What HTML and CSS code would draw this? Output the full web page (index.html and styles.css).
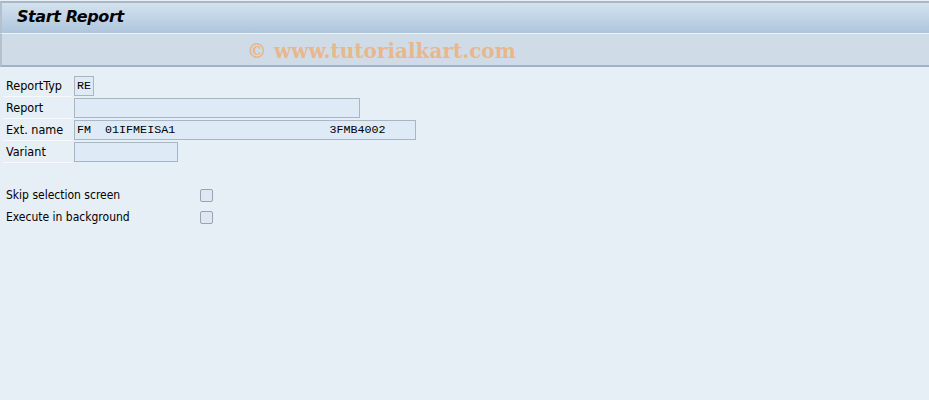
FILE: index.html
```html
<!DOCTYPE html>
<html>
<head>
<meta charset="utf-8">
<link rel="stylesheet" href="styles.css">
</head>
<body>
<div class="header">
  <div class="title-bar"><span class="title">Start Report</span></div>
  <div class="toolbar"><span class="watermark">© www.tutorialkart.com</span></div>
</div>
<div class="content">
  <div class="form">
    <div class="row"><div class="label">ReportTyp</div><div class="field w-re">RE</div></div>
    <div class="row"><div class="label">Report</div><div class="field w-report"></div></div>
    <div class="row"><div class="label">Ext. name</div><div class="field w-ext">FM  01IFMEISA1                      3FMB4002</div></div>
    <div class="row"><div class="label">Variant</div><div class="field w-var"></div></div>
  </div>
  <div class="checks">
    <div class="check-row"><span class="check-label">Skip selection screen</span><span class="checkbox"></span></div>
    <div class="check-row"><span class="check-label">Execute in background</span><span class="checkbox"></span></div>
  </div>
</div>
</body>
</html>
```
FILE: styles.css
```css
html, body {
  margin: 0;
  padding: 0;
}
body {
  background: #e6eef6;
  font-family: Tahoma, "DejaVu Sans", "Liberation Sans", sans-serif;
  font-size: 12px;
  color: #000;
  width: 929px;
  height: 400px;
  overflow: hidden;
}
.header {
  border-top: 1px solid #e9eff5;
}
.title-bar {
  height: 30px;
  border-top: 2px solid #a9b8c7;
  border-left: 2px solid #b3c1cf;
  background: linear-gradient(#d5e2ee, #adc5dc);
  display: flex;
  align-items: center;
  border-bottom: 1px solid #eef3f8;
}
.title {
  font-family: "DejaVu Sans", sans-serif;
  font-weight: bold;
  font-style: italic;
  font-size: 16px;
  padding-left: 15px;
  margin-top: -4px;
  letter-spacing: -0.4px;
}
.toolbar {
  height: 31px;
  background: #cfdce7;
  border-left: 2px solid #b3c1cf;
  border-bottom: 2px solid #9fb1c3;
  position: relative;
}
.watermark {
  position: absolute;
  left: 245px;
  top: 5px;
  font-family: "DejaVu Serif", serif;
  font-weight: bold;
  font-size: 20px;
  color: #e8b78c;
  white-space: pre;
}
.content {
  padding: 8px 0 0 3px;
}
.form {
  display: flex;
  flex-direction: column;
}
.row {
  display: flex;
  height: 22px;
  align-items: flex-start;
}
.label {
  width: 66px;
  height: 21px;
  line-height: 21px;
  padding-left: 3px;
  border-bottom: 1px solid #f7fafc;
  font-family: "DejaVu Sans Condensed", "DejaVu Sans", sans-serif;
  font-size: 12.5px;
}
.field {
  margin-left: 2px;
  margin-top: 1px;
  height: 18px;
  line-height: 18px;
  border: 1px solid #a8b5c2;
  background: #deeaf5;
  font-family: "Liberation Mono", monospace;
  font-size: 11.7px;
  padding-left: 2px;
  white-space: pre;
  box-sizing: content-box;
}
.w-re { width: 16px; }
.w-report { width: 282px; }
.w-ext { width: 338px; }
.w-var { width: 100px; }
.checks {
  margin-top: 21px;
  display: flex;
  flex-direction: column;
}
.check-row {
  display: flex;
  align-items: center;
  height: 22px;
}
.check-label {
  width: 194px;
  padding-left: 3px;
  font-family: "DejaVu Sans Condensed", "DejaVu Sans", sans-serif;
  font-size: 12px;
}
.checkbox {
  width: 11px;
  height: 11px;
  border: 1px solid #98a4b0;
  border-radius: 2px;
  background: #dde8f3;
}
```
